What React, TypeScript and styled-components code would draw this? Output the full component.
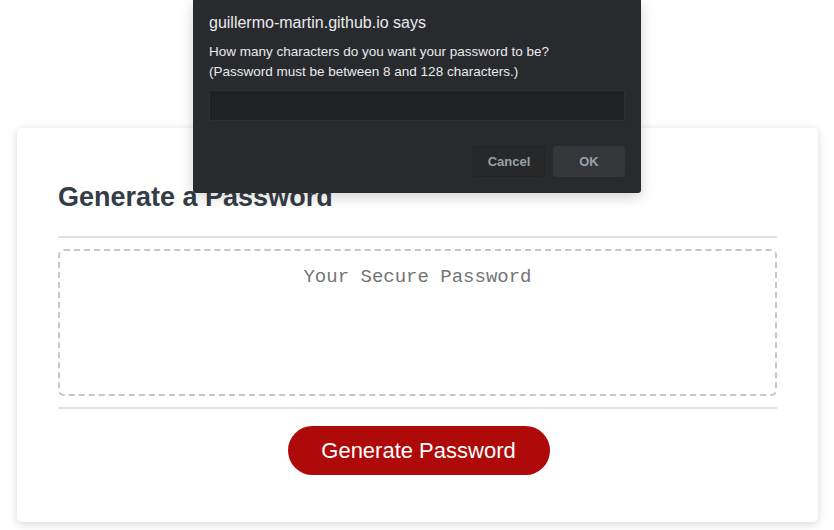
import React from 'react';
import styled, { createGlobalStyle } from 'styled-components';

const GlobalStyle = createGlobalStyle`
    html, body {
        margin: 0;
        padding: 0;
        background: #ffffff;
        font-family: "Liberation Sans", Arial, sans-serif;
    }
`;

const Page = styled.div`
    position: relative;
    width: 834px;
    height: 530px;
    overflow: hidden;
    padding: 128px 16px 0 17px;
    box-sizing: border-box;
`;

const Card = styled.div`
    background: #ffffff;
    border-radius: 5px;
    box-shadow: 0 2px 8px rgba(0, 0, 0, 0.16);
    padding: 54px 41px 47px 41px;
    display: flex;
    flex-direction: column;
    align-items: stretch;
`;

const Title = styled.h2`
    margin: 0;
    font-size: 27px;
    font-weight: 700;
    line-height: 31px;
    color: #343c45;
`;

const Divider = styled.hr<{ $top: number }>`
    border: none;
    height: 2px;
    background: #e3e3e3;
    margin: ${(p) => p.$top}px 0 0 0;
`;

const PasswordBox = styled.textarea`
    margin-top: 11px;
    height: 147px;
    box-sizing: border-box;
    border: 2px dashed #c6c6c6;
    border-radius: 6px;
    padding: 15px 10px;
    resize: none;
    text-align: center;
    font-family: "Liberation Mono", "DejaVu Sans Mono", monospace;
    font-size: 19px;
    background: #ffffff;
    outline: none;

    &::placeholder {
        color: #757575;
    }
`;

const Footer = styled.div`
    display: flex;
    justify-content: center;
    margin-top: 17px;
`;

const GenerateButton = styled.button`
    width: 262px;
    height: 49px;
    margin-left: 2px;
    border: none;
    border-radius: 25px;
    background: #ae0a0a;
    color: #ffffff;
    font-family: "Liberation Sans", Arial, sans-serif;
    font-size: 22px;
    cursor: pointer;
`;

const Dialog = styled.div`
    position: absolute;
    top: 0;
    left: 193px;
    width: 448px;
    height: 193px;
    box-sizing: border-box;
    background: #292a2d;
    border-radius: 0 0 3px 3px;
    box-shadow: 0 4px 14px rgba(0, 0, 0, 0.18);
    padding: 13px 16px 16px 16px;
    display: flex;
    flex-direction: column;
`;

const DialogTitle = styled.div`
    font-size: 16px;
    line-height: 20px;
    color: #e8eaed;
`;

const DialogMessage = styled.div`
    margin-top: 9px;
    font-size: 13.5px;
    line-height: 20px;
    color: #e8eaed;
`;

const DialogInput = styled.input`
    margin-top: 8px;
    height: 31px;
    box-sizing: border-box;
    background: #202124;
    border: 1px solid #303134;
    border-radius: 2px;
    color: #e8eaed;
    outline: none;
`;

const DialogActions = styled.div`
    margin-top: auto;
    display: flex;
    justify-content: flex-end;
    gap: 8px;
`;

const DialogButton = styled.button<{ $primary?: boolean }>`
    width: 72px;
    height: 31px;
    border-radius: 3px;
    border: 1px solid ${(p) => (p.$primary ? '#35363a' : '#232427')};
    background: ${(p) => (p.$primary ? '#35363a' : '#272829')};
    color: #9aa0a6;
    font-family: "Liberation Sans", Arial, sans-serif;
    font-size: 13px;
    font-weight: 700;
`;

export default function App() {
    return (
        <>
            <GlobalStyle />
            <Page>
                <Card>
                    <Title>Generate a Password</Title>
                    <Divider $top={23} />
                    <PasswordBox placeholder="Your Secure Password" readOnly />
                    <Divider $top={11} />
                    <Footer>
                        <GenerateButton>Generate Password</GenerateButton>
                    </Footer>
                </Card>
                <Dialog>
                    <DialogTitle>guillermo-martin.github.io says</DialogTitle>
                    <DialogMessage>
                        How many characters do you want your password to be?
                        <br />
                        (Password must be between 8 and 128 characters.)
                    </DialogMessage>
                    <DialogInput />
                    <DialogActions>
                        <DialogButton>Cancel</DialogButton>
                        <DialogButton $primary>OK</DialogButton>
                    </DialogActions>
                </Dialog>
            </Page>
        </>
    );
}
